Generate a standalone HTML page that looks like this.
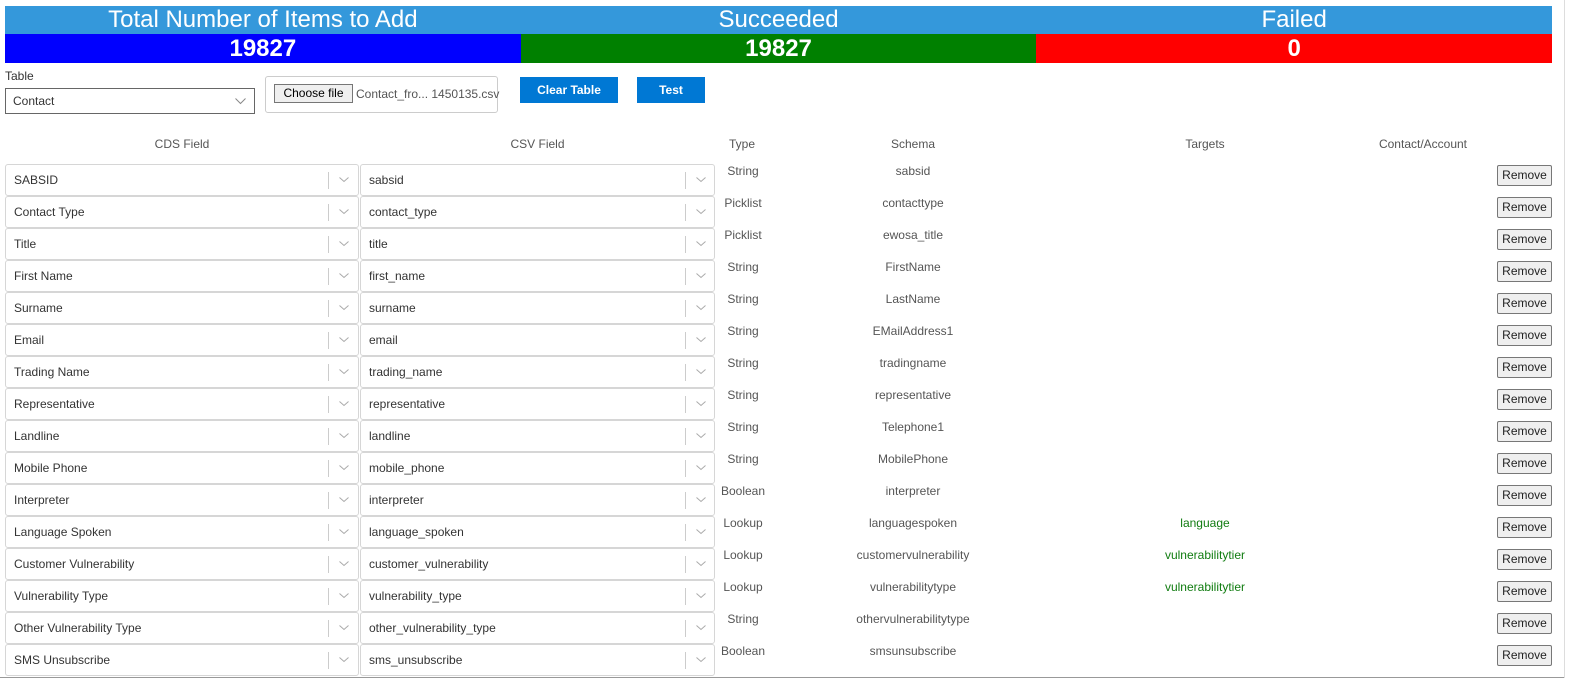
<!DOCTYPE html>
<html><head><meta charset="utf-8"><style>
*{box-sizing:border-box;margin:0;padding:0}
body{width:1581px;height:678px;overflow:hidden;background:#fff;font-family:"Liberation Sans",Arial,sans-serif;position:relative;color:#333}
.a{position:absolute}
.hd{top:6px;height:28px;background:#3498db;color:#fff;font-size:24px;text-align:center;line-height:28px;width:515.7px}
.nm{top:34px;height:29px;color:#fff;font-size:24px;font-weight:bold;text-align:center;line-height:29px;width:515.7px}
.sel{height:32px;border:1px solid #d6d6d6;border-radius:3px;background:#fff;font-size:12px;line-height:30px;padding-left:8px;color:#333}
.sel .dv{position:absolute;top:7px;width:1px;height:17px;background:#ccc}
.sel svg{position:absolute;top:12px}
.ch{font-size:12px;color:#555;text-align:center}
.tp{font-size:12px;color:#555}
.rm{left:1497px;width:55px;height:21px;border:1px solid #777;background:#efefef;border-radius:2px;font-size:12px;color:#222;text-align:center;line-height:19px}
.btn{background:#0078d4;color:#fff;font-weight:bold;font-size:12px;text-align:center;line-height:26px;height:26px}
</style></head><body>
<div class="a hd" style="left:5px">Total Number of Items to Add</div>
<div class="a hd" style="left:520.7px">Succeeded</div>
<div class="a hd" style="left:1036.3px">Failed</div>
<div class="a nm" style="left:5px;background:#0000ff">19827</div>
<div class="a nm" style="left:520.7px;background:#008000">19827</div>
<div class="a nm" style="left:1036.3px;background:#ff0000">0</div>
<div class="a" style="left:1564px;top:0;width:1px;height:678px;background:#ddd"></div>

<div class="a" style="left:5px;top:69px;font-size:12px;color:#333">Table</div>
<div class="a" style="left:5px;top:88px;width:250px;height:26px;border:1px solid #666;font-size:12px;line-height:24px;padding-left:7px">Contact
<svg class="a" style="left:229px;top:9px" width="11" height="7" viewBox="0 0 11 7"><path d="M0.5 0.5 L5.5 5.5 L10.5 0.5" fill="none" stroke="#888" stroke-width="1"/></svg></div>
<div class="a" style="left:265px;top:76px;width:233px;height:37px;border:1px solid #ccc;border-radius:3px"></div>
<div class="a" style="left:274px;top:84px;width:79px;height:19px;border:1px solid #767676;background:#efefef;font-size:12px;line-height:17px;text-align:center;color:#000">Choose file</div>
<div class="a" style="left:356px;top:87px;font-size:12px;color:#555">Contact_fro... 1450135.csv</div>
<div class="a btn" style="left:520px;top:77px;width:98px">Clear Table</div>
<div class="a btn" style="left:637px;top:77px;width:68px">Test</div>

<div class="a ch" style="left:5px;top:137px;width:354px">CDS Field</div>
<div class="a ch" style="left:360px;top:137px;width:355px">CSV Field</div>
<div class="a ch" style="left:722px;top:137px;width:40px">Type</div>
<div class="a ch" style="left:853px;top:137px;width:120px">Schema</div>
<div class="a ch" style="left:1145px;top:137px;width:120px">Targets</div>
<div class="a ch" style="left:1363px;top:137px;width:120px">Contact/Account</div>

<div id="rows"></div>
<script>
var d=[["SABSID","sabsid","String","sabsid",""],["Contact Type","contact_type","Picklist","contacttype",""],["Title","title","Picklist","ewosa_title",""],["First Name","first_name","String","FirstName",""],["Surname","surname","String","LastName",""],["Email","email","String","EMailAddress1",""],["Trading Name","trading_name","String","tradingname",""],["Representative","representative","String","representative",""],["Landline","landline","String","Telephone1",""],["Mobile Phone","mobile_phone","String","MobilePhone",""],["Interpreter","interpreter","Boolean","interpreter",""],["Language Spoken","language_spoken","Lookup","languagespoken","language"],["Customer Vulnerability","customer_vulnerability","Lookup","customervulnerability","vulnerabilitytier"],["Vulnerability Type","vulnerability_type","Lookup","vulnerabilitytype","vulnerabilitytier"],["Other Vulnerability Type","other_vulnerability_type","String","othervulnerabilitytype",""],["SMS Unsubscribe","sms_unsubscribe","Boolean","smsunsubscribe",""]];
var h="",chev='<path d="M0.5 0.5 L5 4.5 L9.5 0.5" fill="none" stroke="#aaa" stroke-width="1"/>';
d.forEach(function(r,i){var t=164+32*i;
h+='<div class="a sel" style="left:5px;top:'+t+'px;width:354px">'+r[0]+'<div class="dv" style="left:322px"></div><svg style="left:333px" width="10" height="6" viewBox="0 0 10 6">'+chev+'</svg></div>';
h+='<div class="a sel" style="left:360px;top:'+t+'px;width:355px">'+r[1]+'<div class="dv" style="left:324px"></div><svg style="left:335px" width="10" height="6" viewBox="0 0 10 6">'+chev+'</svg></div>';
h+='<div class="a tp" style="left:719px;top:'+(t)+'px;width:48px;text-align:center">'+r[2]+'</div>';
h+='<div class="a tp" style="left:833px;top:'+(t)+'px;width:160px;text-align:center">'+r[3]+'</div>';
if(r[4])h+='<div class="a tp" style="left:1125px;top:'+(t)+'px;width:160px;text-align:center;color:#107c10">'+r[4]+'</div>';
h+='<div class="a rm" style="top:'+(t+1)+'px">Remove</div>';});
document.getElementById("rows").innerHTML=h;
</script>
<div class="a" style="left:0;top:677px;width:1564px;height:1px;background:#999"></div>
</body></html>
